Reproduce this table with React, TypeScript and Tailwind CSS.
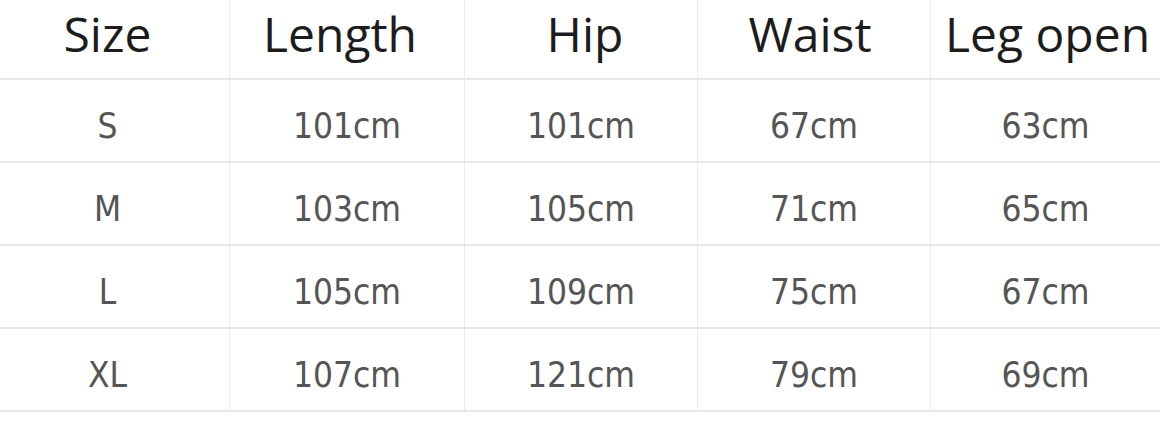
const headers = ['Size', 'Length', 'Hip', 'Waist', 'Leg open'];

// small nudges so each heading sits where the picture has it
const headerNudge = ['pr-[14px]', 'pr-[14px]', 'pl-2', 'pr-2', 'pl-1'];

const rows = [
  ['S', '101cm', '101cm', '67cm', '63cm'],
  ['M', '103cm', '105cm', '71cm', '65cm'],
  ['L', '105cm', '109cm', '75cm', '67cm'],
  ['XL', '107cm', '121cm', '79cm', '69cm'],
];

const cols = 'grid grid-cols-[230px_235px_233px_233px_229px]';

export default function App() {
  return (
    <div className="w-[1170px] h-[423px] bg-white overflow-hidden">
      <div className="w-[1160px]">
        {/* Header */}
        <div className={`${cols} h-[80px] border-b-2 border-[#e6e6e6]`}>
          {headers.map((h, i) => (
            <div
              key={h}
              className={`flex items-center justify-center pb-[11px] ${headerNudge[i]} text-[48px] leading-none text-[#1c1c1c] font-['Open_Sans',sans-serif] ${
                i < headers.length - 1 ? 'border-r border-[#ececec]' : ''
              }`}
            >
              {h}
            </div>
          ))}
        </div>

        {/* Rows */}
        {rows.map((r) => (
          <div key={r[0]} className={`${cols} h-[83px] border-b-2 border-[#e6e6e6]`}>
            {r.map((v, i) => (
              <div
                key={i}
                className={`flex items-center justify-center pt-3 text-[35px] leading-none font-stretch-condensed text-[#555] font-['DejaVu_Sans_Condensed','DejaVu_Sans',sans-serif] ${
                  i === 0 ? 'pr-[14px]' : ''
                } ${i < r.length - 1 ? 'border-r border-[#ececec]' : ''}`}
              >
                {v}
              </div>
            ))}
          </div>
        ))}
      </div>
    </div>
  );
}
